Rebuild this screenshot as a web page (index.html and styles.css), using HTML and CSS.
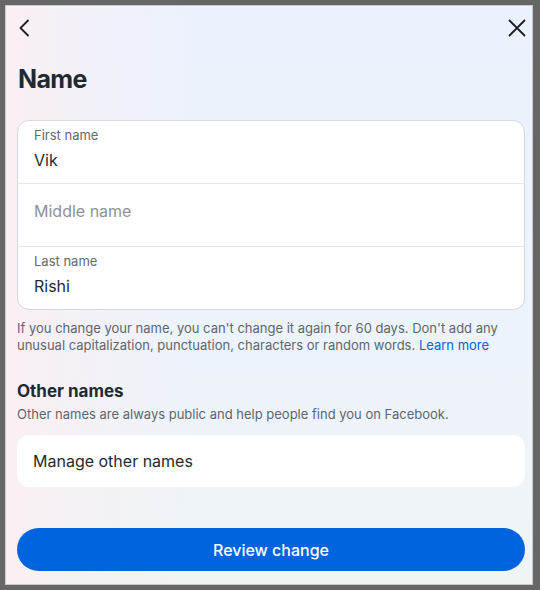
FILE: index.html
```html
<!DOCTYPE html>
<html lang="en">
<head>
<meta charset="utf-8">
<title>Name</title>
<link rel="stylesheet" href="styles.css">
</head>
<body>
<div class="panel">
  <div class="topbar">
    <button class="icon-btn" aria-label="Back">
      <svg width="12" height="18" viewBox="0 0 12 18"><path d="M10 1.5 L2.5 9 L10 16.5" fill="none" stroke="#1c1e21" stroke-width="1.8" stroke-linecap="round" stroke-linejoin="round"/></svg>
    </button>
    <button class="icon-btn" aria-label="Close">
      <svg width="18" height="18" viewBox="0 0 18 18"><path d="M1.5 1.5 L16.5 16.5 M16.5 1.5 L1.5 16.5" fill="none" stroke="#1c1e21" stroke-width="1.8" stroke-linecap="round"/></svg>
    </button>
  </div>

  <h1 class="title">Name</h1>

  <div class="fields">
    <div class="field">
      <div class="label">First name</div>
      <div class="value">Vik</div>
    </div>
    <div class="field empty">
      <div class="placeholder">Middle name</div>
    </div>
    <div class="field">
      <div class="label">Last name</div>
      <div class="value">Rishi</div>
    </div>
  </div>

  <p class="help">If you change your name, you can't change it again for 60 days. Don't add any unusual capitalization, punctuation, characters or random words. <a href="#" class="link">Learn more</a></p>

  <h2 class="subhead">Other names</h2>
  <p class="subtext">Other names are always public and help people find you on Facebook.</p>

  <div class="manage">Manage other names</div>

  <button class="primary">Review change</button>
</div>
</body>
</html>
```

FILE: styles.css
```css
* { box-sizing: border-box; }

html, body {
  margin: 0;
  padding: 0;
}

body {
  background: #666666;
  padding: 5px;
  font-family: Inter, "Noto Sans", "Liberation Sans", sans-serif;
  color: #1c2b33;
}

.panel {
  width: 528px;
  height: 580px;
  border: 1px solid #c9cccf;
  padding: 0 7px 0 11px;
  background:
    linear-gradient(to right, rgba(253, 238, 242, 0.85) 0%, rgba(253, 238, 242, 0.3) 18%, rgba(253, 238, 242, 0) 35%),
    linear-gradient(to bottom, #ecf2fd 0%, #edf3fb 55%, #eff4f6 100%);
  overflow: hidden;
}

.topbar {
  display: flex;
  justify-content: space-between;
  align-items: center;
  height: 18px;
  margin-top: 13px;
}

.icon-btn {
  border: 0;
  background: none;
  padding: 0;
  display: flex;
  align-items: center;
  justify-content: center;
}

.icon-btn:first-child { margin-left: 1px; }
.icon-btn:last-child { margin-right: -1px; }

.title {
  margin: 26px 0 0 1px;
  font-size: 25px;
  line-height: 32px;
  font-weight: 700;
  letter-spacing: -0.6px;
  color: #1c2b33;
}

.fields {
  margin-top: 25px;
  background: #ffffff;
  border: 1px solid #d5d8dc;
  border-radius: 12px;
  overflow: hidden;
}

.field {
  height: 63px;
  padding: 6px 16px 0;
  border-bottom: 1px solid #e3e5e8;
}

.field:last-child {
  height: 62px;
  border-bottom: 0;
}

.field.empty {
  padding-top: 17px;
}

.label {
  font-size: 13px;
  line-height: 16px;
  color: #65686c;
}

.value {
  margin-top: 7px;
  font-size: 16px;
  line-height: 20px;
  color: #1c2b33;
}

.placeholder {
  font-size: 16px;
  line-height: 20px;
  color: #8d9196;
}

.help {
  margin: 10px 0 0;
  font-size: 13px;
  line-height: 17px;
  color: #5d6670;
}

.link {
  color: #0064d1;
  text-decoration: none;
}

.subhead {
  margin: 26px 0 0;
  font-size: 17px;
  line-height: 22px;
  font-weight: 700;
  color: #1c2b33;
}

.subtext {
  margin: 4px 0 0;
  font-size: 13px;
  line-height: 17px;
  color: #5d6670;
}

.manage {
  margin-top: 12px;
  height: 52px;
  background: #ffffff;
  border-radius: 12px;
  padding: 0 16px;
  display: flex;
  align-items: center;
  font-size: 16px;
  color: #1c2b33;
}

.primary {
  display: block;
  width: 100%;
  margin-top: 41px;
  height: 43px;
  border: 0;
  border-radius: 22px;
  background: #0064e0;
  color: #ffffff;
  font-family: inherit;
  font-size: 16px;
  font-weight: 500;
}
```
